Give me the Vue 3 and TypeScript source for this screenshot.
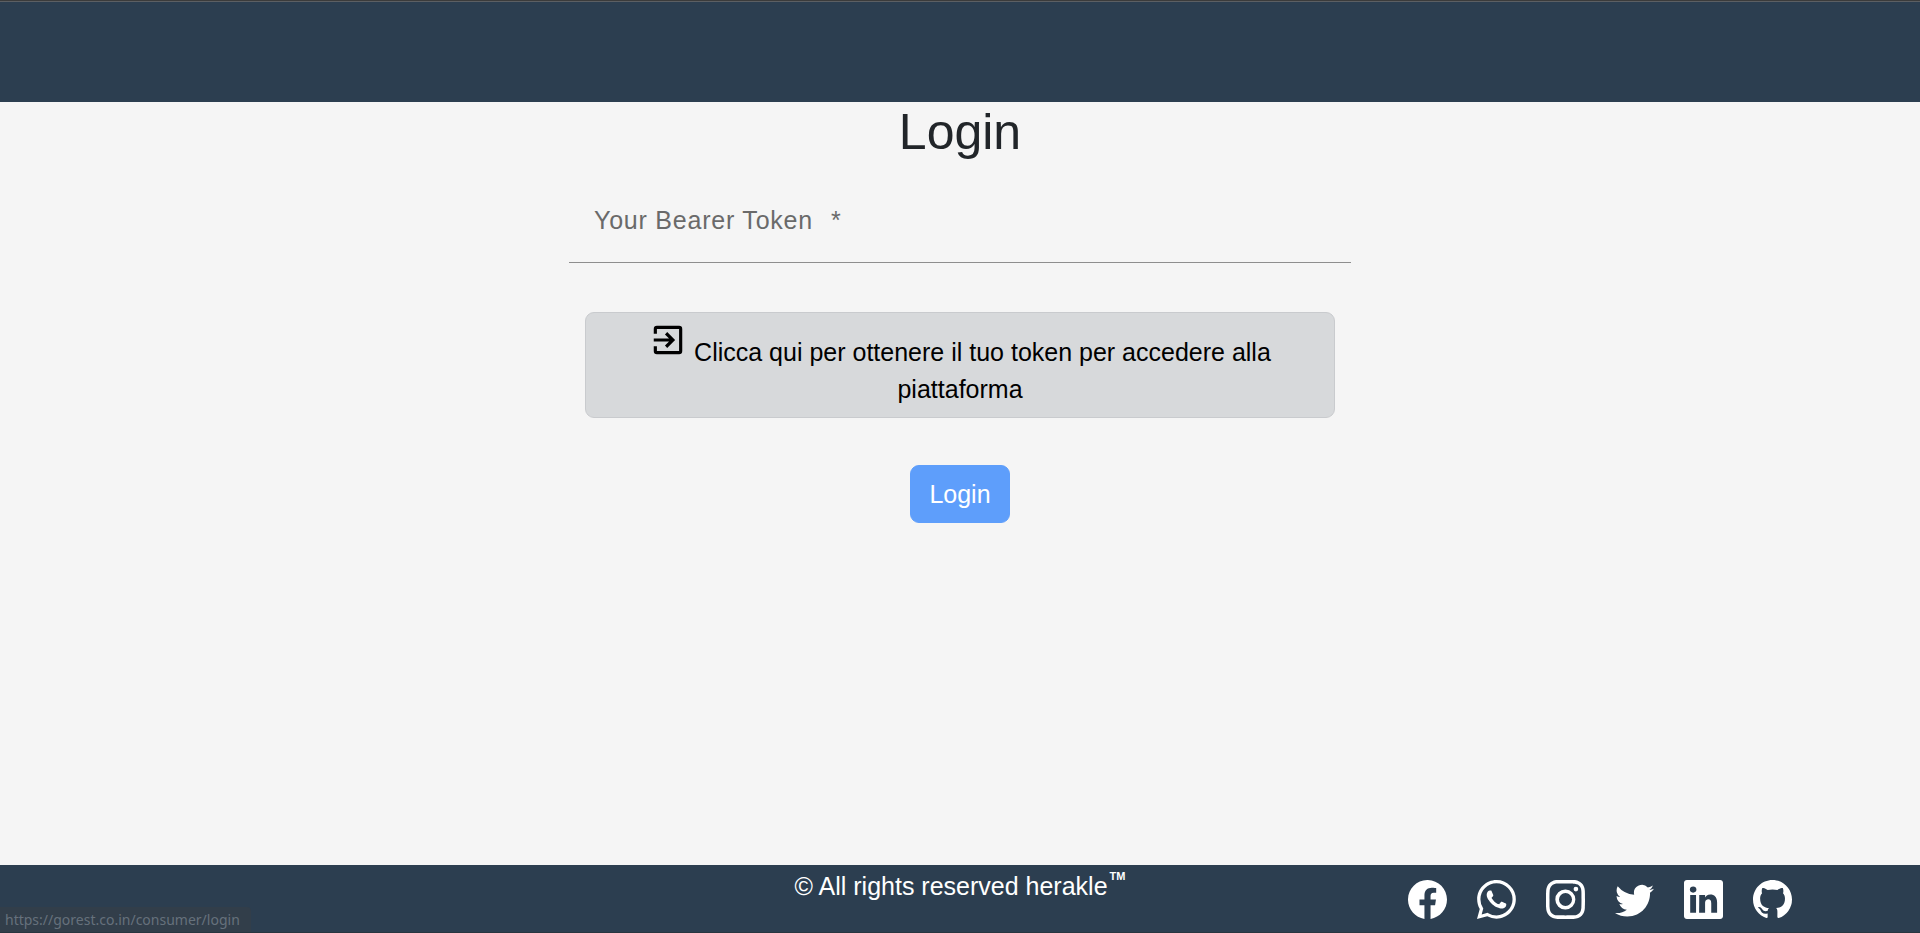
<script setup lang="ts">
import { ref } from 'vue'

interface SocialLink {
  name: string
  path: string
}

const token = ref('')

const socials: SocialLink[] = [
  {
    name: 'Facebook',
    path: 'M16 8.049c0-4.446-3.582-8.05-8-8.05C3.58 0-.002 3.603-.002 8.05c0 4.017 2.926 7.347 6.75 7.951v-5.625h-2.03V8.05H6.75V6.275c0-2.017 1.195-3.131 3.022-3.131.876 0 1.791.157 1.791.157v1.98h-1.009c-.993 0-1.303.621-1.303 1.258v1.51h2.218l-.354 2.326H9.25V16c3.824-.604 6.75-3.934 6.75-7.951z',
  },
  {
    name: 'WhatsApp',
    path: 'M13.601 2.326A7.854 7.854 0 0 0 7.994 0C3.627 0 .068 3.558.064 7.926c0 1.399.366 2.76 1.057 3.965L0 16l4.204-1.102a7.933 7.933 0 0 0 3.79.965h.004c4.368 0 7.926-3.558 7.93-7.93A7.898 7.898 0 0 0 13.6 2.326zM7.994 14.521a6.573 6.573 0 0 1-3.356-.92l-.24-.144-2.494.654.666-2.433-.156-.251a6.56 6.56 0 0 1-1.007-3.505c0-3.626 2.957-6.584 6.591-6.584a6.56 6.56 0 0 1 4.66 1.931 6.557 6.557 0 0 1 1.928 4.66c-.004 3.639-2.961 6.592-6.592 6.592zm3.615-4.934c-.197-.099-1.17-.578-1.353-.646-.182-.065-.315-.099-.445.099-.133.197-.513.646-.627.775-.114.133-.232.148-.43.05-.197-.1-.836-.308-1.592-.985-.59-.525-.985-1.175-1.103-1.372-.114-.198-.011-.304.088-.403.087-.088.197-.232.296-.346.1-.114.133-.198.198-.33.065-.134.034-.248-.015-.347-.05-.099-.445-1.076-.612-1.47-.16-.389-.323-.335-.445-.34-.114-.007-.247-.007-.38-.007a.729.729 0 0 0-.529.247c-.182.198-.691.677-.691 1.654 0 .977.71 1.916.81 2.049.098.133 1.394 2.132 3.383 2.992.47.205.84.326 1.129.418.475.152.904.129 1.246.08.38-.058 1.171-.48 1.338-.943.164-.464.164-.86.114-.943-.049-.084-.182-.133-.38-.232z',
  },
  {
    name: 'Instagram',
    path: 'M8 0C5.829 0 5.556.01 4.703.048 3.85.088 3.269.222 2.76.42a3.917 3.917 0 0 0-1.417.923A3.927 3.927 0 0 0 .42 2.76C.222 3.268.087 3.85.048 4.7.01 5.555 0 5.827 0 8.001c0 2.172.01 2.444.048 3.297.04.852.174 1.433.372 1.942.205.526.478.972.923 1.417.444.445.89.719 1.416.923.51.198 1.09.333 1.942.372C5.555 15.99 5.827 16 8 16s2.444-.01 3.298-.048c.851-.04 1.434-.174 1.943-.372a3.916 3.916 0 0 0 1.416-.923c.445-.445.718-.891.923-1.417.197-.509.332-1.09.372-1.942C15.99 10.445 16 10.173 16 8s-.01-2.445-.048-3.299c-.04-.851-.175-1.433-.372-1.941a3.926 3.926 0 0 0-.923-1.417A3.911 3.911 0 0 0 13.24.42c-.51-.198-1.092-.333-1.943-.372C10.443.01 10.172 0 7.998 0h.003zm-.717 1.442h.718c2.136 0 2.389.007 3.232.046.78.035 1.204.166 1.486.275.373.145.64.319.92.599.28.28.453.546.598.92.11.281.24.705.275 1.485.039.843.047 1.096.047 3.231s-.008 2.389-.047 3.232c-.035.78-.166 1.203-.275 1.485a2.47 2.47 0 0 1-.599.919c-.28.28-.546.453-.92.598-.28.11-.704.24-1.485.276-.843.038-1.096.047-3.232.047s-2.39-.009-3.233-.047c-.78-.036-1.203-.166-1.485-.276a2.478 2.478 0 0 1-.92-.598 2.48 2.48 0 0 1-.6-.92c-.109-.281-.24-.705-.275-1.485-.038-.843-.046-1.096-.046-3.233 0-2.136.008-2.388.046-3.231.036-.78.166-1.204.276-1.486.145-.373.319-.64.599-.92.28-.28.546-.453.92-.598.282-.11.705-.24 1.485-.276.738-.034 1.024-.044 2.515-.045v.002zm4.988 1.328a.96.96 0 1 0 0 1.92.96.96 0 0 0 0-1.92zm-4.27 1.122a4.109 4.109 0 1 0 0 8.217 4.109 4.109 0 0 0 0-8.217zm0 1.441a2.667 2.667 0 1 1 0 5.334 2.667 2.667 0 0 1 0-5.334z',
  },
  {
    name: 'Twitter',
    path: 'M5.026 15c6.038 0 9.341-5.003 9.341-9.334 0-.14 0-.282-.006-.422A6.685 6.685 0 0 0 16 3.542a6.658 6.658 0 0 1-1.889.518 3.301 3.301 0 0 0 1.447-1.817 6.533 6.533 0 0 1-2.087.793A3.286 3.286 0 0 0 7.875 6.03a9.325 9.325 0 0 1-6.767-3.429 3.289 3.289 0 0 0 1.018 4.382A3.323 3.323 0 0 1 .64 6.575v.045a3.288 3.288 0 0 0 2.632 3.218 3.203 3.203 0 0 1-.865.115 3.23 3.23 0 0 1-.614-.057 3.283 3.283 0 0 0 3.067 2.277A6.588 6.588 0 0 1 .78 13.58a6.32 6.32 0 0 1-.78-.045A9.344 9.344 0 0 0 5.026 15z',
  },
  {
    name: 'LinkedIn',
    path: 'M0 1.146C0 .513.526 0 1.175 0h13.65C15.474 0 16 .513 16 1.146v13.708c0 .633-.526 1.146-1.175 1.146H1.175C.526 16 0 15.487 0 14.854V1.146zm4.943 12.248V6.169H2.542v7.225h2.401zm-1.2-8.212c.837 0 1.358-.554 1.358-1.248-.015-.709-.52-1.248-1.342-1.248-.822 0-1.359.54-1.359 1.248 0 .694.521 1.248 1.327 1.248h.016zm4.908 8.212V9.359c0-.216.016-.432.08-.586.173-.431.568-.878 1.232-.878.869 0 1.216.662 1.216 1.634v3.865h2.401V9.25c0-2.22-1.184-3.252-2.764-3.252-1.274 0-1.845.7-2.165 1.193v.025h-.016a5.54 5.54 0 0 1 .016-.025V6.169h-2.4c.03.678 0 7.225 0 7.225h2.4z',
  },
  {
    name: 'GitHub',
    path: 'M8 0C3.58 0 0 3.58 0 8c0 3.54 2.29 6.53 5.47 7.59.4.07.55-.17.55-.38 0-.19-.01-.82-.01-1.49-2.01.37-2.53-.49-2.69-.94-.09-.23-.48-.94-.82-1.13-.28-.15-.68-.52-.01-.53.63-.01 1.08.58 1.23.82.72 1.21 1.87.87 2.33.66.07-.52.28-.87.51-1.07-1.78-.2-3.64-.89-3.64-3.95 0-.87.31-1.59.82-2.15-.08-.2-.36-1.02.08-2.12 0 0 .67-.21 2.2.82.64-.18 1.32-.27 2-.27.68 0 1.36.09 2 .27 1.53-1.04 2.2-.82 2.2-.82.44 1.1.16 1.92.08 2.12.51.56.82 1.27.82 2.15 0 3.07-1.87 3.75-3.65 3.95.29.25.54.73.54 1.48 0 1.07-.01 1.93-.01 2.2 0 .21.15.46.55.38A8.012 8.012 0 0 0 16 8c0-4.42-3.58-8-8-8z',
  },
]
</script>

<template>
  <div class="page">
    <header class="topbar"></header>

    <main class="content">
      <h1 class="title">Login</h1>
      <form class="login" @submit.prevent>
        <div class="field">
          <input id="token" v-model="token" class="field-input" type="text" required />
          <label v-show="!token" class="field-label" for="token">Your Bearer Token<span class="required">*</span></label>
        </div>
        <a class="token-link" href="https://gorest.co.in/consumer/login">
          <svg class="enter" viewBox="0 0 24 24" aria-hidden="true">
            <path d="M3 8V5q0-2 2-2h14q2 0 2 2v14q0 2-2 2H5q-2 0-2-2v-3h2v3h14V5H5v3zM11.5 17l-1.4-1.45L12.65 13H3v-2h9.65L10.1 8.45 11.5 7l5 5z" />
          </svg>
          Clicca qui per ottenere il tuo token per accedere alla piattaforma
        </a>
        <button class="submit" type="submit" :disabled="!token">Login</button>
      </form>
    </main>

    <footer class="footer">
      <p class="rights">© All rights reserved herakle<sup class="mark">TM</sup></p>
      <nav class="socials" aria-label="Social">
        <a v-for="s in socials" :key="s.name" class="social" href="#" :aria-label="s.name">
          <svg viewBox="0 0 16 16" aria-hidden="true">
            <path :d="s.path" />
          </svg>
        </a>
      </nav>
    </footer>

    <div class="status">https://gorest.co.in/consumer/login</div>
  </div>
</template>

<style>
body {
  margin: 0;
}
</style>

<style scoped>
.page {
  box-sizing: border-box;
  min-height: 100vh;
  display: flex;
  flex-direction: column;
  position: relative;
  border-top: 1px solid #3b3b3b;
  background: #f5f5f5;
  color: #212529;
  font-family: "Liberation Sans", Arial, sans-serif;
  font-size: 25px;
  line-height: 37px;
}
.topbar {
  height: 100px;
  border-top: 1px solid #5c5f63;
  background: #2c3e50;
}
.content {
  flex: 1;
  display: flex;
  flex-direction: column;
  align-items: center;
}
.title {
  margin: 0 0 10px;
  font-size: 50px;
  font-weight: 400;
  line-height: 60px;
}
.login {
  width: 100%;
  max-width: 782px;
  display: flex;
  flex-direction: column;
  align-items: center;
}
.field {
  position: relative;
  width: 100%;
  margin-bottom: 49px;
}
.field-input {
  box-sizing: border-box;
  display: block;
  width: 100%;
  height: 91px;
  padding: 24px 25px;
  border: 0;
  border-bottom: 1px solid #8e8e8e;
  outline: 0;
  background: transparent;
  font: inherit;
}
.field-label {
  position: absolute;
  top: 30px;
  left: 25px;
  color: #6a6a6a;
  letter-spacing: 0.03125em;
}
.required {
  margin-left: 18px;
}
.token-link {
  box-sizing: border-box;
  width: 750px;
  max-width: 100%;
  margin-bottom: 47px;
  padding: 8px 24px 9px;
  border: 1px solid #c9cbce;
  border-radius: 9px;
  background: #d7d9db;
  color: #000;
  text-align: center;
  text-decoration: none;
}
.enter {
  width: 38px;
  height: 38px;
  vertical-align: 2px;
  fill: #000;
}
.submit {
  padding: 10px 18px;
  border: 1px solid #5e9efb;
  border-radius: 9px;
  background: #5e9efb;
  color: #fff;
  font: inherit;
  line-height: 36px;
}
.footer {
  display: grid;
  grid-template-columns: 1fr 1fr 1fr;
  min-height: 67px;
  border-bottom: 1px solid #28353f;
  background: #2c3e50;
  color: #fff;
}
.rights {
  grid-column: 2;
  margin: 3px 0 0;
  text-align: center;
}
.mark {
  margin-left: 2px;
  font-size: 11px;
  font-weight: 700;
  line-height: 0;
  vertical-align: 15px;
}
.socials {
  display: flex;
  justify-content: center;
  gap: 30px;
  padding-top: 15px;
}
.social {
  width: 39px;
  height: 39px;
  color: #fff;
}
.social svg {
  display: block;
  width: 100%;
  height: 100%;
  fill: currentColor;
}
.status {
  position: absolute;
  left: 0;
  bottom: 1px;
  padding: 0 11px 0 5px;
  border-top-right-radius: 4px;
  background: #323e4a;
  color: #66717c;
  font-family: "Noto Sans", "Open Sans", sans-serif;
  font-size: 14px;
  line-height: 25px;
}
</style>
